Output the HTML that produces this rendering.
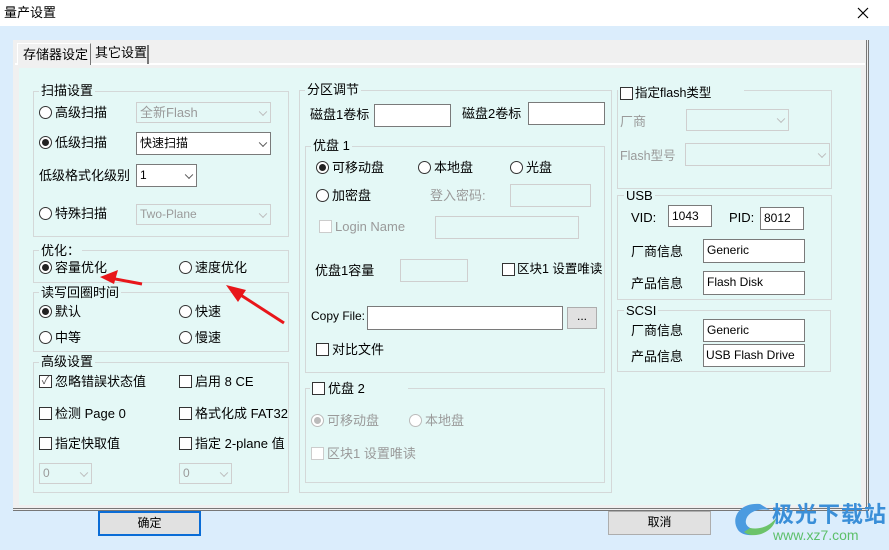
<!DOCTYPE html><html><head><meta charset="utf-8"><style>
*{box-sizing:border-box;margin:0;padding:0}
body{width:889px;height:550px;overflow:hidden;background:#dbedfc;font-family:"Liberation Sans","Noto Sans CJK SC",sans-serif;font-size:12px;color:#000;position:relative;line-height:15px}
.a{position:absolute;white-space:nowrap;line-height:15px}
.g{position:absolute;border:1px solid #d4d8d8}
.gl{position:absolute;background:#e4f8f6;padding:0 2px;line-height:14px}
.in{position:absolute;background:#fff;border:1px solid #7a7a7a;padding:2px 3px;line-height:16px;white-space:nowrap;overflow:hidden;font-size:12px!important}
.dis{position:absolute;border:1px solid #cfcfcf;background:#e4f8f6}
.gray{color:#9a9a9a}
.r{position:absolute;width:13px;height:13px;border:1px solid #333;border-radius:50%;background:#fff}
.r.on::after{content:"";position:absolute;left:2px;top:2px;width:7px;height:7px;border-radius:50%;background:#222}
.r.d{border-color:#bbb}.r.d.on::after{background:#bbb}
.c{position:absolute;width:13px;height:13px;border:1px solid #333;background:#fff}
.c.d{border-color:#ccc}
.arr{position:absolute;right:4px;top:50%;width:6px;height:6px;border-right:1px solid #555;border-bottom:1px solid #555;transform:translateY(-70%) rotate(45deg)}
.arr.d{border-color:#bbb}
.btn{position:absolute;background:#e1e1e1;border:1px solid #adadad;text-align:center;line-height:21px}
</style></head><body>
<div class="a" style="left:0;top:0;width:889px;height:26px;background:#fff"></div>
<div class="a" style="left:4px;top:5px;font-size:13px">量产设置</div>
<svg class="a" style="left:857px;top:7px" width="12" height="12"><path d="M1 1L11 11M11 1L1 11" stroke="#000" stroke-width="1.2"/></svg>
<div class="a" style="left:13px;top:40px;width:856px;height:471px;background:#f0f0f0;border-right:3px double #777;border-bottom:3px double #777"></div>
<div class="a" style="left:15px;top:63px;width:850px;height:2px;background:#fff"></div>
<div class="a" style="left:17px;top:43px;width:74px;height:22px;background:#f0f0f0;border:1px solid #fff;border-right:1px solid #777;border-bottom:none;padding:3px 5px 0;font-size:13px">存储器设定</div>
<div class="a" style="left:91px;top:45px;width:58px;height:19px;border-right:2px solid #777;padding:0 4px;font-size:13px">其它设置</div>
<div class="a" style="left:19px;top:68px;width:842px;height:437px;background:#e4f8f6"></div>

<div class="g" style="left:33px;top:91px;width:256px;height:146px"></div>
<div class="gl" style="left:39px;top:84px;font-size:13px">扫描设置</div>
<div class="r" style="left:39px;top:106px"></div><div class="a" style="left:55px;top:105px;font-size:13px">高级扫描</div>
<div class="dis" style="left:136px;top:102px;width:135px;height:21px"><span class="a gray" style="left:3px;top:2px;font-size:13px">全新Flash</span><i class="arr d"></i></div>
<div class="r on" style="left:39px;top:136px"></div><div class="a" style="left:55px;top:135px;font-size:13px">低级扫描</div>
<div class="in" style="left:136px;top:132px;width:135px;height:23px;font-size:13px">快速扫描<i class="arr"></i></div>
<div class="a" style="left:39px;top:168px;font-size:13px">低级格式化级别</div>
<div class="in" style="left:136px;top:164px;width:61px;height:23px">1<i class="arr"></i></div>
<div class="r" style="left:39px;top:207px"></div><div class="a" style="left:55px;top:206px;font-size:13px">特殊扫描</div>
<div class="dis" style="left:136px;top:204px;width:135px;height:21px"><span class="a gray" style="left:3px;top:2px">Two-Plane</span><i class="arr d"></i></div>

<div class="g" style="left:33px;top:250px;width:256px;height:33px"></div>
<div class="gl" style="left:39px;top:244px;font-size:13px">优化：</div>
<div class="r on" style="left:39px;top:261px"></div><div class="a" style="left:55px;top:260px;font-size:13px">容量优化</div>
<div class="r" style="left:179px;top:261px"></div><div class="a" style="left:195px;top:260px;font-size:13px">速度优化</div>
<div class="g" style="left:33px;top:292px;width:256px;height:60px"></div>
<div class="gl" style="left:39px;top:286px;font-size:13px">读写回圈时间</div>
<div class="r on" style="left:39px;top:305px"></div><div class="a" style="left:55px;top:304px;font-size:13px">默认</div>
<div class="r" style="left:179px;top:305px"></div><div class="a" style="left:195px;top:304px;font-size:13px">快速</div>
<div class="r" style="left:39px;top:331px"></div><div class="a" style="left:55px;top:330px;font-size:13px">中等</div>
<div class="r" style="left:179px;top:331px"></div><div class="a" style="left:195px;top:330px;font-size:13px">慢速</div>
<div class="g" style="left:33px;top:362px;width:256px;height:131px"></div>
<div class="gl" style="left:39px;top:355px;font-size:13px">高级设置</div>
<div class="c" style="left:39px;top:375px;font-size:11px;line-height:10px;text-align:center;color:#555">✓</div><div class="a" style="left:55px;top:374px;font-size:13px">忽略错誤状态值</div>
<div class="c" style="left:179px;top:375px"></div><div class="a" style="left:195px;top:374px;font-size:13px">启用 8 CE</div>
<div class="c" style="left:39px;top:407px"></div><div class="a" style="left:55px;top:406px;font-size:13px">检测 Page 0</div>
<div class="c" style="left:179px;top:407px"></div><div class="a" style="left:195px;top:406px;font-size:13px">格式化成 FAT32</div>
<div class="c" style="left:39px;top:437px"></div><div class="a" style="left:55px;top:436px;font-size:13px">指定快取值</div>
<div class="c" style="left:179px;top:437px"></div><div class="a" style="left:195px;top:436px;font-size:13px">指定 2-plane 值</div>
<div class="dis" style="left:39px;top:463px;width:53px;height:21px"><span class="a gray" style="left:3px;top:2px">0</span><i class="arr d"></i></div>
<div class="dis" style="left:179px;top:463px;width:53px;height:21px"><span class="a gray" style="left:3px;top:2px">0</span><i class="arr d"></i></div>

<svg class="a" style="left:0;top:0" width="889" height="550"><g stroke="#e8161a" fill="#e8161a" stroke-width="3"><line x1="142" y1="284" x2="110" y2="278"/><polygon points="100,277 118,270 114,284" stroke="none"/><line x1="284" y1="323" x2="236" y2="292"/><polygon points="226,285 246,290 238,302" stroke="none"/></g></svg>

<div class="g" style="left:299px;top:90px;width:313px;height:403px"></div>
<div class="gl" style="left:305px;top:83px;font-size:13px">分区调节</div>
<div class="a" style="left:310px;top:107px;font-size:13px">磁盘1卷标</div>
<div class="in" style="left:374px;top:104px;width:77px;height:23px"></div>
<div class="a" style="left:462px;top:106px;font-size:13px">磁盘2卷标</div>
<div class="in" style="left:528px;top:102px;width:77px;height:23px"></div>
<div class="g" style="left:305px;top:146px;width:300px;height:227px"></div>
<div class="gl" style="left:311px;top:139px;font-size:13px">优盘 1</div>
<div class="r on" style="left:316px;top:161px"></div><div class="a" style="left:332px;top:160px;font-size:13px">可移动盘</div>
<div class="r" style="left:418px;top:161px"></div><div class="a" style="left:434px;top:160px;font-size:13px">本地盘</div>
<div class="r" style="left:510px;top:161px"></div><div class="a" style="left:526px;top:160px;font-size:13px">光盘</div>
<div class="r" style="left:316px;top:189px"></div><div class="a" style="left:332px;top:188px;font-size:13px">加密盘</div>
<div class="a gray" style="left:430px;top:188px;font-size:13px">登入密码:</div>
<div class="dis" style="left:510px;top:184px;width:81px;height:23px"></div>
<div class="c d" style="left:319px;top:220px"></div><div class="a gray" style="left:335px;top:219px;font-size:13px">Login Name</div>
<div class="dis" style="left:435px;top:216px;width:144px;height:23px"></div>
<div class="a" style="left:315px;top:263px;font-size:13px">优盘1容量</div>
<div class="dis" style="left:400px;top:259px;width:68px;height:23px"></div>
<div class="c" style="left:502px;top:263px"></div><div class="a" style="left:517px;top:262px;font-size:12.5px">区块1 设置唯读</div>
<div class="a" style="left:311px;top:309px;font-size:12px">Copy File:</div>
<div class="in" style="left:367px;top:306px;width:196px;height:24px"></div>
<div class="btn" style="left:567px;top:307px;width:30px;height:22px;line-height:17px">...</div>
<div class="c" style="left:316px;top:343px"></div><div class="a" style="left:332px;top:342px;font-size:13px">对比文件</div>
<div class="g" style="left:305px;top:388px;width:300px;height:95px"></div>
<div class="gl" style="left:310px;top:381px;width:98px;height:16px"></div>
<div class="c" style="left:312px;top:382px"></div><div class="a" style="left:328px;top:381px;font-size:13px">优盘 2</div>
<div class="r d on" style="left:311px;top:414px"></div><div class="a gray" style="left:327px;top:413px;font-size:13px">可移动盘</div>
<div class="r d" style="left:409px;top:414px"></div><div class="a gray" style="left:425px;top:413px;font-size:13px">本地盘</div>
<div class="c d" style="left:311px;top:447px"></div><div class="a gray" style="left:327px;top:446px;font-size:13px">区块1 设置唯读</div>

<div class="g" style="left:617px;top:90px;width:215px;height:99px"></div>
<div class="gl" style="left:618px;top:86px;width:126px;height:16px"></div>
<div class="c" style="left:620px;top:87px"></div><div class="a" style="left:635px;top:86px;font-size:12.5px">指定flash类型</div>
<div class="a gray" style="left:620px;top:114px;font-size:13px">厂商</div>
<div class="dis" style="left:686px;top:109px;width:103px;height:22px"><i class="arr d"></i></div>
<div class="a gray" style="left:620px;top:149px;font-size:12.5px">Flash型号</div>
<div class="dis" style="left:685px;top:143px;width:145px;height:23px"><i class="arr d"></i></div>
<div class="g" style="left:617px;top:195px;width:215px;height:105px"></div>
<div class="gl" style="left:624px;top:189px;font-size:13px">USB</div>
<div class="a" style="left:631px;top:210px;font-size:13px">VID:</div>
<div class="in" style="left:668px;top:205px;width:44px;height:22px">1043</div>
<div class="a" style="left:729px;top:210px;font-size:13px">PID:</div>
<div class="in" style="left:760px;top:207px;width:44px;height:23px">8012</div>
<div class="a" style="left:631px;top:244px;font-size:13px">厂商信息</div>
<div class="in" style="left:703px;top:239px;width:102px;height:24px">Generic</div>
<div class="a" style="left:631px;top:276px;font-size:13px">产品信息</div>
<div class="in" style="left:703px;top:271px;width:102px;height:24px">Flash Disk</div>
<div class="g" style="left:617px;top:310px;width:214px;height:62px"></div>
<div class="gl" style="left:624px;top:304px;font-size:13px">SCSI</div>
<div class="a" style="left:631px;top:323px;font-size:13px">厂商信息</div>
<div class="in" style="left:703px;top:319px;width:102px;height:23px">Generic</div>
<div class="a" style="left:631px;top:349px;font-size:13px">产品信息</div>
<div class="in" style="left:703px;top:344px;width:102px;height:23px;padding:2px 2px">USB Flash Drive</div>

<div class="btn" style="left:98px;top:511px;width:103px;height:25px;border:2px solid #0a6cd6">确定</div>
<div class="btn" style="left:608px;top:511px;width:103px;height:24px">取消</div>

<svg class="a" style="left:730px;top:498px" width="50" height="42"><path d="M30 6 C10 4 0 20 8 32 C14 40 30 38 36 30 C26 34 14 30 16 22 C18 14 28 10 40 12 Z" fill="#4b9be0"/><path d="M14 34 C24 42 44 34 46 20 C40 28 30 32 20 30 Z" fill="#6cc36a"/></svg>
<div class="a" style="left:772px;top:503px;font-size:22px;line-height:24px;font-weight:bold;color:#3a8fd8;letter-spacing:1px">极光下载站</div>
<div class="a" style="left:773px;top:528px;font-size:14px;color:#5cbf6a">www.xz7.com</div>
</body></html>
